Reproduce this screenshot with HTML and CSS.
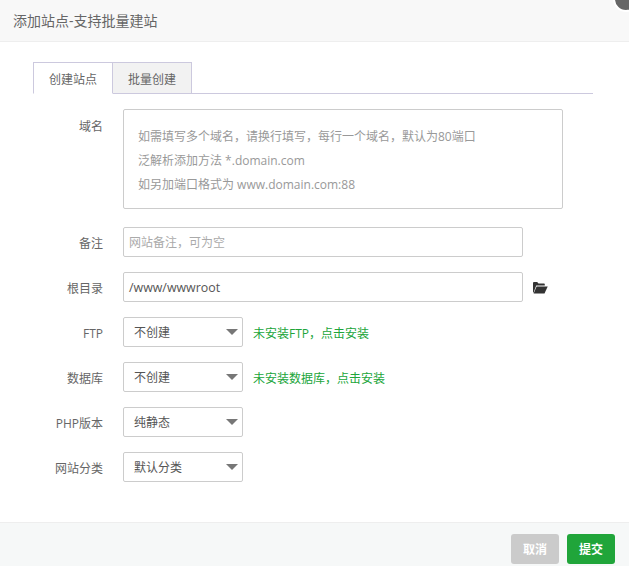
FILE: index.html
```html
<!DOCTYPE html>
<html lang="zh-CN">
<head>
<meta charset="utf-8">
<title>添加站点</title>
<link rel="stylesheet" href="styles.css">
</head>
<body>
<div class="dialog">
  <header class="title">添加站点-支持批量建站</header>
  <span class="close" aria-hidden="true"></span>
  <main class="content">
    <div class="tabs">
      <span class="tab active">创建站点</span>
      <span class="tab">批量创建</span>
    </div>
    <form class="form">
      <div class="row row-area">
        <label class="label label-area">域名</label>
        <div class="area">
          <p>如需填写多个域名，请换行填写，每行一个域名，默认为80端口</p>
          <p>泛解析添加方法 *.domain.com</p>
          <p>如另加端口格式为 www.domain.com:88</p>
        </div>
      </div>
      <div class="row">
        <label class="label">备注</label>
        <div class="input placeholder">网站备注，可为空</div>
      </div>
      <div class="row">
        <label class="label">根目录</label>
        <div class="input">/www/wwwroot</div>
        <svg class="folder" viewBox="0 0 16 13" width="16" height="13"><path d="M1 12V2.2C1 1.5 1.5 1 2.2 1h3l1.3 1.4h5.3c.6 0 1 .4 1 1V4.6H4.2L1.8 11z" fill="#333"/><path d="M1.6 12.4h10.9l3.2-7H4.6z" fill="#333"/></svg>
      </div>
      <div class="row">
        <label class="label">FTP</label>
        <div class="select">不创建</div>
        <a class="hint">未安装FTP，点击安装</a>
      </div>
      <div class="row">
        <label class="label">数据库</label>
        <div class="select">不创建</div>
        <a class="hint">未安装数据库，点击安装</a>
      </div>
      <div class="row">
        <label class="label">PHP版本</label>
        <div class="select">纯静态</div>
      </div>
      <div class="row">
        <label class="label">网站分类</label>
        <div class="select">默认分类</div>
      </div>
    </form>
  </main>
  <footer class="footer">
    <button class="btn cancel" type="button">取消</button>
    <button class="btn submit" type="button">提交</button>
  </footer>
</div>
</body>
</html>
```

FILE: styles.css
```css
* { box-sizing: border-box; }
html, body { margin: 0; height: 100%; }
body {
  font-family: "Open Sans", "Noto Sans CJK SC", sans-serif;
  font-size: 12px;
  color: #555;
  background: #fff;
  overflow: hidden;
}
.dialog {
  position: relative;
  width: 629px;
  height: 566px;
  display: flex;
  flex-direction: column;
}
.title {
  height: 42px;
  line-height: 42px;
  padding-left: 13px;
  font-size: 14px;
  color: #666;
  background: #f8f8f8;
  border-bottom: 1px solid #eee;
}
.close {
  position: absolute;
  right: -10px;
  top: -14px;
  width: 26px;
  height: 26px;
  border-radius: 50%;
  background: #666;
  border: 2px solid #fff;
}
.content { flex: 1; padding: 20px 36px 0 33px; }
.tabs {
  display: flex;
  height: 32px;
  border-bottom: 1px solid #ccc9de;
}
.tab {
  height: 32px;
  line-height: 33px;
  text-align: center;
  padding: 0 15px;
  color: #666;
  background: #f2f2f2;
  border: 1px solid #ccc9de;
  border-left: 0;
}
.tab.active {
  width: 80px;
  background: #fff;
  border-left: 1px solid #ccc9de;
  border-bottom-color: #fff;
}
.form { padding-top: 15px; }
.row {
  display: flex;
  align-items: center;
  height: 30px;
  margin-bottom: 15px;
}
.row-area { height: 100px; align-items: flex-start; margin-bottom: 18px; }
.label {
  width: 70px;
  margin-right: 20px;
  padding-top: 2px;
  text-align: right;
  color: #666;
}
.label-area { padding-top: 8px; }
.area {
  width: 440px;
  height: 100px;
  padding: 15px 14px;
  border: 1px solid #ccc;
  border-radius: 2px;
  color: #999;
  font-size: 12px;
  line-height: 24px;
}
.area p { margin: 0; }
.input {
  width: 400px;
  height: 30px;
  line-height: 30px;
  padding-left: 5px;
  border: 1px solid #ccc;
  border-radius: 2px;
  font-size: 12.4px;
  color: #555;
}
.input.placeholder { color: #aaa; font-size: 12px; }
.folder { margin-left: 9px; }
.select {
  position: relative;
  width: 120px;
  height: 30px;
  line-height: 30px;
  padding-left: 10px;
  border: 1px solid #ccc;
  border-radius: 2px;
  color: #555;
}
.select::after {
  content: "";
  position: absolute;
  right: 4px;
  top: 11px;
  border-style: solid;
  border-width: 6px 6px 0;
  border-color: #777 transparent transparent;
}
.hint { margin-left: 10px; padding-top: 2px; color: #20a53a; }
.footer {
  height: 44px;
  display: flex;
  justify-content: flex-end;
  gap: 8px;
  padding: 11px 14px 0 0;
  background: #f6f8f8;
  border-top: 1px solid #eee;
}
.btn {
  width: 48px;
  height: 30px;
  padding: 0;
  border: 0;
  border-radius: 3px;
  color: #fff;
  font: 600 12px "Open Sans", "Noto Sans CJK SC", sans-serif;
}
.cancel { background: #cbcbcb; }
.submit { background: #20a53a; }
```
